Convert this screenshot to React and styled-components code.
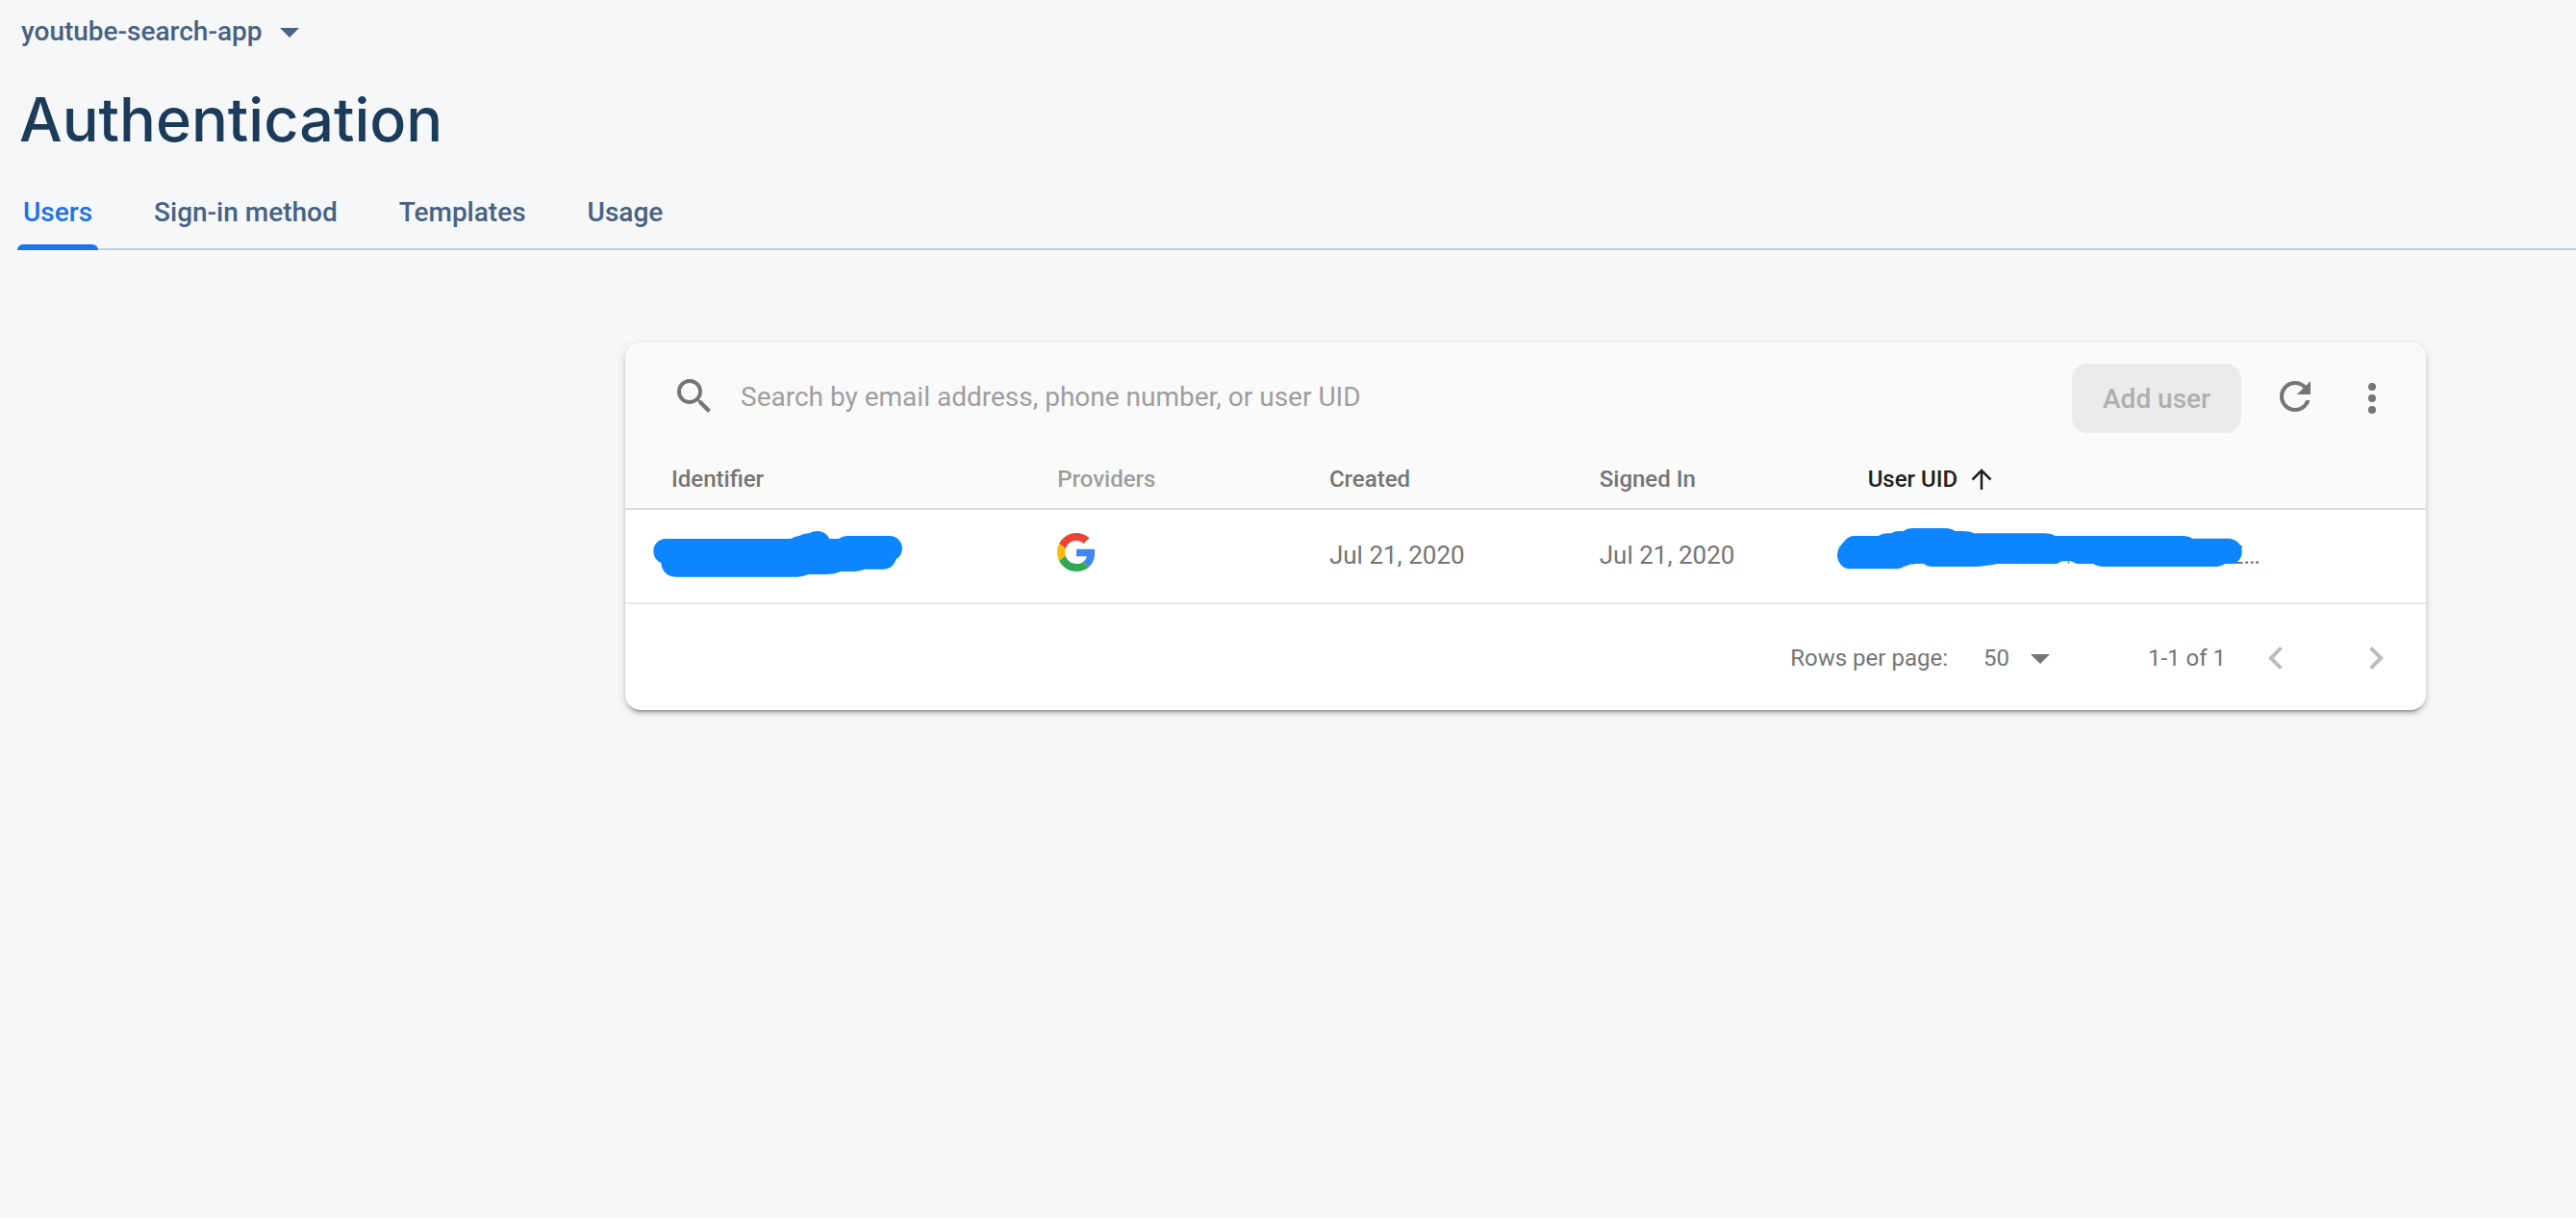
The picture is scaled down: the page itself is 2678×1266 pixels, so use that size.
import React from "react";
import styled, { createGlobalStyle } from "styled-components";

const GlobalStyle = createGlobalStyle`
  *, *::before, *::after { box-sizing: border-box; }
  body {
    margin: 0;
    min-height: 100vh;
    background: #f6f7f9;
    font-family: Roboto, "Liberation Sans", sans-serif;
    color: #757575;
  }
  button, input, select {
    margin: 0;
    padding: 0;
    border: 0;
    background: none;
    font: inherit;
    color: inherit;
  }
`;

const Header = styled.header`
  padding: 17px 0 0 18px;
`;

const SelectWrap = styled.div`
  position: relative;
  display: inline-flex;
  align-items: center;
  line-height: 32px;
  font-size: ${(p) => p.$size}px;
  font-weight: ${(p) => p.$weight};
  color: ${(p) => p.$color};
`;

const Select = styled.select`
  appearance: none;
  height: 32px;
  padding-right: ${(p) => p.$room}px;
  cursor: pointer;
`;

const Caret = styled.svg`
  position: absolute;
  right: 4px;
  top: 12px;
  width: 20px;
  height: 10px;
  fill: currentColor;
  pointer-events: none;
`;

const ProjectRow = styled.div`
  display: flex;
  padding-left: 4px;
`;

const Title = styled.h1`
  margin: 37px 0 0;
  padding-left: 2px;
  font-family: Inter, Roboto, sans-serif;
  font-size: 63px;
  line-height: 76px;
  font-weight: 500;
  color: #1c3a5a;
`;

const Tabs = styled.nav`
  display: flex;
  gap: 52px;
  margin-top: 37px;
  border-bottom: 2px solid #c3d0dd;
`;

const Tab = styled.a`
  position: relative;
  margin-bottom: -2px;
  padding: 6px 6px 23px;
  font-size: 28px;
  line-height: 32px;
  font-weight: 500;
  text-decoration: none;
  color: ${(p) => (p.$active ? "#1a73e8" : "#476282")};

  &::after {
    content: "";
    position: absolute;
    left: 0;
    right: 0;
    bottom: 0;
    height: 6px;
    border-radius: 6px 6px 0 0;
    background: ${(p) => (p.$active ? "#1a73e8" : "transparent")};
  }
`;

const Main = styled.main`
  padding: 96px 156px;
`;

const Card = styled.section`
  width: 100%;
  max-width: 1872px;
  margin-left: auto;
  border-radius: 16px;
  background: #fff;
  overflow: hidden;
  box-shadow: 0 6px 2px -4px rgba(0, 0, 0, 0.2), 0 4px 4px rgba(0, 0, 0, 0.14),
    0 2px 10px rgba(0, 0, 0, 0.12);
`;

const Toolbar = styled.div`
  display: flex;
  align-items: center;
  gap: 32px;
  padding: 22px 32px 18px 48px;
  background: #fafafa;
`;

const SearchBox = styled.label`
  flex: 1;
  display: flex;
  align-items: center;
  gap: 24px;
  padding-bottom: 4px;
`;

const SearchInput = styled.input`
  flex: 1;
  min-width: 0;
  height: 48px;
  font-size: 28px;
  outline: none;

  &::placeholder {
    color: #9e9e9e;
    opacity: 1;
  }
`;

const AddButton = styled.button`
  height: 72px;
  padding: 0 32px;
  border-radius: 16px;
  background: #ebebeb;
  color: #afafaf;
  font-size: 28px;
  font-weight: 500;
`;

const Icon = styled.svg`
  display: block;
  flex: none;
  width: 48px;
  height: 48px;
  fill: currentColor;
`;

const IconButton = styled.button`
  display: grid;
  place-items: center;
  width: 48px;
  height: 48px;
  cursor: pointer;
`;

const Table = styled.table`
  width: 100%;
  table-layout: fixed;
  border-collapse: separate;
  border-spacing: 0;
`;

const HeadCell = styled.th`
  width: ${(p) => p.$width};
  height: 62px;
  padding: 0;
  border-bottom: 2px solid #dcdcdc;
  background: #fafafa;
  text-align: left;
  font-size: 24px;
  line-height: 28px;
  font-weight: 500;
  color: ${(p) => p.$color || "#757575"};

  &:first-child { padding-left: 48px; }
`;

const SortButton = styled.button`
  display: flex;
  align-items: center;
  gap: 13px;
  cursor: pointer;
`;

const SortArrow = styled.svg`
  width: 24px;
  height: 24px;
  fill: none;
  stroke: currentColor;
  stroke-width: 2.5;
`;

const Cell = styled.td`
  height: 98px;
  padding: 0 0 2px;
  border-bottom: 2px solid #e9e9e9;
  font-size: 26px;
  line-height: 32px;

  &:first-child { padding-left: 48px; }
`;

const ProviderLogo = styled.svg`
  display: block;
  width: 40px;
  height: 40px;
  margin-bottom: 6px;
`;

const IdentifierMark = styled.svg`
  display: block;
  width: 264px;
  height: 48px;
  margin: 0 0 2px -22px;
`;

const Uid = styled.div`
  position: relative;
  width: 408px;
  text-align: right;
`;

const UidMark = styled.svg`
  position: absolute;
  left: -34px;
  top: -13px;
  width: 428px;
  height: 44px;
`;

const Footer = styled.footer`
  display: flex;
  align-items: center;
  justify-content: flex-end;
  height: 110px;
  padding: 2px 12px 0 0;
  font-size: 24px;
  line-height: 28px;
`;

const PageSize = styled.div`
  display: flex;
  align-items: center;
  gap: 37px;
  margin-right: 98px;
`;

const Pager = styled.div`
  display: flex;
  gap: 24px;
  margin-left: 12px;
`;

const PagerButton = styled.button`
  display: grid;
  place-items: center;
  width: 80px;
  height: 80px;
  color: #bdbdbd;
`;

const CaretDown = () => (
  <Caret viewBox="0 0 20 10" aria-hidden="true">
    <path d="M0 0h20L10 10z" />
  </Caret>
);

const tabs = ["Users", "Sign-in method", "Templates", "Usage"];

export default function App() {
  return (
    <>
      <GlobalStyle />
      <Header>
        <ProjectRow>
          <SelectWrap $size={28} $weight={500} $color="#476282">
            <Select aria-label="Project" $room={42}>
              <option>youtube-search-app</option>
            </Select>
            <CaretDown />
          </SelectWrap>
        </ProjectRow>
        <Title>Authentication</Title>
        <Tabs>
          {tabs.map((name, i) => (
            <Tab key={name} href="#" $active={i === 0}>
              {name}
            </Tab>
          ))}
        </Tabs>
      </Header>
      <Main>
        <Card>
          <Toolbar>
            <SearchBox>
              <Icon viewBox="0 0 24 24" aria-hidden="true">
                <path d="M15.5 14h-.79l-.28-.27A6.47 6.47 0 0 0 16 9.5 6.5 6.5 0 1 0 9.5 16c1.61 0 3.09-.59 4.23-1.57l.27.28v.79l5 4.99L20.49 19l-4.99-5zm-6 0C7.01 14 5 11.99 5 9.5S7.01 5 9.5 5 14 7.01 14 9.5 11.99 14 9.5 14z" />
              </Icon>
              <SearchInput
                type="text"
                aria-label="Search users"
                placeholder="Search by email address, phone number, or user UID"
              />
            </SearchBox>
            <AddButton type="button" disabled>
              Add user
            </AddButton>
            <IconButton type="button" aria-label="Refresh">
              <Icon viewBox="0 1 24 24" aria-hidden="true">
                <path d="M17.65 6.35A7.96 7.96 0 0 0 12 4a8 8 0 1 0 7.73 10h-2.08A6 6 0 1 1 12 6c1.66 0 3.14.69 4.22 1.78L13 11h7V4l-2.35 2.35z" />
              </Icon>
            </IconButton>
            <IconButton type="button" aria-label="More options">
              <Icon viewBox="0 0 24 24" aria-hidden="true">
                <path d="M12 8a2 2 0 1 0 0-4 2 2 0 0 0 0 4zm0 2a2 2 0 1 0 0 4 2 2 0 0 0 0-4zm0 6a2 2 0 1 0 0 4 2 2 0 0 0 0-4z" />
              </Icon>
            </IconButton>
          </Toolbar>
          <Table>
            <thead>
              <tr>
                <HeadCell $width="24%">Identifier</HeadCell>
                <HeadCell $width="15.1%" $color="#9e9e9e">Providers</HeadCell>
                <HeadCell $width="15%">Created</HeadCell>
                <HeadCell $width="14.9%">Signed In</HeadCell>
                <HeadCell $width="31%" $color="#212121">
                  <SortButton type="button">
                    User UID
                    <SortArrow viewBox="0 0 24 24" aria-hidden="true">
                      <path d="M12 23V3M2.5 12.5L12 3l9.5 9.5" />
                    </SortArrow>
                  </SortButton>
                </HeadCell>
              </tr>
            </thead>
            <tbody>
              <tr>
                <Cell>
                  <IdentifierMark viewBox="18 36 792 144" role="img" aria-label="Hidden identifier">
                    <path
                      fill="#0d85ff"
                      d="M66 60H456Q468 52 484 50Q496 44 512 43Q526 36 542 36Q566 38 577 60H606Q616 52 630 51H764C788 51 804 70 804 91Q803 112 785 124C778 142 766 155 746 155H686Q670 162 640 162H612Q592 171 566 171H512Q496 178 478 179H96C72 179 53 160 52 136Q28 124 28 98C28 76 46 60 66 60Z"
                    />
                  </IdentifierMark>
                </Cell>
                <Cell>
                  <ProviderLogo viewBox="0 0 48 48" role="img" aria-label="Google">
                    <path fill="#ea4335" d="M24 9.5c3.54 0 6.71 1.22 9.21 3.6l6.85-6.85C35.9 2.38 30.47 0 24 0 14.62 0 6.51 5.38 2.56 13.22l7.98 6.19C12.43 13.72 17.74 9.5 24 9.5z" />
                    <path fill="#4285f4" d="M46.98 24.55c0-1.57-.15-3.09-.38-4.55H24v9.02h12.94c-.58 2.96-2.26 5.48-4.78 7.18l7.73 6c4.51-4.18 7.09-10.36 7.09-17.65z" />
                    <path fill="#fbbc05" d="M10.53 28.59c-.48-1.45-.76-2.99-.76-4.59s.27-3.14.76-4.59l-7.98-6.19C.92 16.46 0 20.12 0 24c0 3.88.92 7.54 2.56 10.78l7.97-6.19z" />
                    <path fill="#34a853" d="M24 48c6.48 0 11.93-2.13 15.89-5.81l-7.73-6c-2.15 1.45-4.92 2.3-8.16 2.3-6.26 0-11.57-4.22-13.47-9.91l-7.98 6.19C6.51 42.62 14.62 48 24 48z" />
                  </ProviderLogo>
                </Cell>
                <Cell>Jul 21, 2020</Cell>
                <Cell>Jul 21, 2020</Cell>
                <Cell>
                  <Uid>
                    Z…
                    <UidMark viewBox="54 24 1284 132" role="img" aria-label="Hidden user UID">
                      <path
                        fill="#0d85ff"
                        d="M112 51H188Q200 43 214 43H228Q240 36 254 36H266Q278 27 294 27H402Q418 28 428 36H450Q472 36 486 43H710Q728 44 740 51H1140Q1156 52 1168 59H1282C1306 61 1322 78 1322 99C1322 122 1310 136 1292 138H1270Q1256 146 1244 147H890Q870 146 858 138H808L788 130H762L744 138H560Q520 146 488 147H352Q338 146 330 138H306Q286 138 268 147Q256 154 244 154H100C76 154 60 132 60 110Q60 96 68 84L84 65Q98 51 112 51Z"
                      />
                      <path fill="none" stroke="#757575" strokeWidth="1" strokeDasharray="14 9" d="M612 138H748" />
                      <path fill="#757575" d="M779 131h5v6h-5z" />
                    </UidMark>
                  </Uid>
                </Cell>
              </tr>
            </tbody>
          </Table>
          <Footer>
            <PageSize>
              <label htmlFor="page-size">Rows per page:</label>
              <SelectWrap $size={24} $weight={400} $color="#757575">
                <Select id="page-size" $room={46}>
                  <option>50</option>
                </Select>
                <CaretDown />
              </SelectWrap>
            </PageSize>
            <span>1-1 of 1</span>
            <Pager>
              <PagerButton type="button" aria-label="Previous page" disabled>
                <Icon viewBox="0 0 24 24" aria-hidden="true">
                  <path d="M15.41 7.41L14 6l-6 6 6 6 1.41-1.41L10.83 12z" />
                </Icon>
              </PagerButton>
              <PagerButton type="button" aria-label="Next page" disabled>
                <Icon viewBox="0 0 24 24" aria-hidden="true">
                  <path d="M10 6L8.59 7.41 13.17 12l-4.58 4.59L10 18l6-6z" />
                </Icon>
              </PagerButton>
            </Pager>
          </Footer>
        </Card>
      </Main>
    </>
  );
}
